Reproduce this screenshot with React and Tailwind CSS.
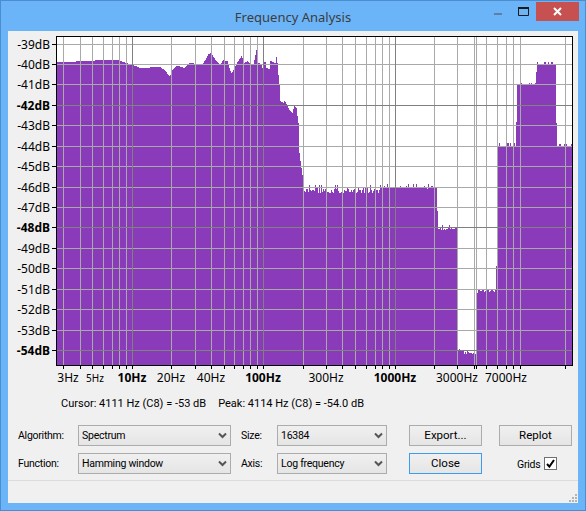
const ANCHORS = [
  [57, 62], [75, 62], [76, 61], [94, 61], [95, 60], [118, 60], [122, 61.5], [126, 63], [132, 65], [136, 66], [139, 68],
  [149, 68], [150, 67], [160, 67], [164, 70], [169, 76], [170, 75], [172, 70], [176, 66], [178, 66], [184, 68], [189, 63],
  [193, 63], [194, 64], [202, 64], [206, 58], [208, 54], [211, 53], [212, 55], [215, 60], [218, 63], [220, 64], [223, 60],
  [227, 61], [229, 68], [231, 73], [233, 70], [236, 64], [241, 56], [242, 58], [244, 63], [247, 61], [250, 64], [253, 65],
  [254, 60], [255, 55], [256, 50], [257, 50], [258, 63], [261, 64], [262, 68], [263, 61], [265, 62], [266, 68], [269, 69],
  [270, 61], [273, 62], [275, 63], [276, 57], [277, 63], [278, 75], [279, 85], [280, 101], [283, 103], [284, 101], [287, 105],
  [289, 110], [292, 113], [294, 105], [296, 108], [298, 123], [299, 153], [301, 168], [302, 175], [303, 187],
]

function noise(x) {
  const n = Math.sin(x * 12.9898) * 43758.5453
  return n - Math.floor(n)
}

function topAt(x) {
  if (x <= 303) {
    for (let i = 1; i < ANCHORS.length; i++) {
      const [x1, y1] = ANCHORS[i]
      if (x <= x1) {
        const [x0, y0] = ANCHORS[i - 1]
        return Math.round(y0 + ((y1 - y0) * (x - x0)) / (x1 - x0))
      }
    }
  }
  const r = noise(x)
  if (x < 383) return r > 0.9 ? 183 + Math.round(r * 2) : 187 + Math.round(r * 7)
  if (x < 435) return r > 0.85 ? 182 + Math.round(r * 2) : 186 + Math.round(r * 3)
  if (x < 437) return 187
  if (x < 438) return 211
  if (x < 457) return 227 + (r > 0.6 ? Math.round(r * 3) : 0) - (r < 0.1 ? 2 : 0)
  if (x < 464) return 349 + Math.round(r * 2)
  if (x < 476) return 351 + Math.round(r * 3)
  if (x < 478) return 293
  if (x < 496) return 289 + Math.round(r * 3)
  if (x < 498) return 266
  if (x < 516) return r > 0.75 ? 143 : 146
  if (x < 517) return 122
  if (x < 536) return r > 0.8 ? 83 : 84
  if (x < 537) return 72
  if (x < 556) return r > 0.6 ? 62 : 64
  if (x < 557) return 123
  return r > 0.7 ? 144 : 146
}

let spectrumPath = 'M57 365'
for (let x = 57; x < 572; x++) {
  spectrumPath += `V${topAt(x)}H${x + 1}`
}
spectrumPath += 'V365Z'

const DB_ROWS = [
  [44, '-39dB'], [64, '-40dB'], [84, '-41dB'], [105, '-42dB', true], [125, '-43dB'], [146, '-44dB'], [166, '-45dB'], [187, '-46dB'],
  [207, '-47dB'], [227, '-48dB', true], [248, '-49dB'], [268, '-50dB'], [289, '-51dB'], [309, '-52dB'], [330, '-53dB'], [350, '-54dB', true],
]
const LIGHT_X = [63, 80, 92, 103, 112, 119, 126, 171, 195, 211, 224, 234, 243, 250, 257, 303, 326, 342, 355, 366, 375, 382, 389, 434, 457, 474, 476, 486, 497, 506, 513, 520, 565]
const DARK_X = [132, 263, 395]
const HZ_LABELS = [
  [68, '3Hz'], [95, '5Hz', false, true], [132, '10Hz', true], [171, '20Hz'], [211, '40Hz'], [263, '100Hz', true],
  [326, '300Hz'], [395, '1000Hz', true], [457, '3000Hz'], [506, '7000Hz'],
]

const chartFont = { fontFamily: '"Noto Sans", sans-serif' }
const uiFont = { fontFamily: 'Roboto, sans-serif' }

function Spectrum() {
  return (
    <svg width="570" height="358" viewBox="8 31 570 358" className="block" style={chartFont}>
      <rect x="57" y="37" width="515" height="328" fill="#ffffff" />
      <path d={spectrumPath} fill="#8a3bb9" shapeRendering="crispEdges" />
      <g shapeRendering="crispEdges">
        {LIGHT_X.map(x => (
          <rect key={x} x={x} y="37" width="1" height="328" fill="#a9a9a9" />
        ))}
        {DB_ROWS.map(([y, , major]) => (
          <rect key={y} x="57" y={y} width="515" height="1" fill={major ? '#808080' : '#a9a9a9'} />
        ))}
        {DARK_X.map(x => (
          <rect key={x} x={x} y="37" width="1" height="328" fill="#808080" />
        ))}
        <rect x="56" y="36" width="517" height="1" fill="#000" />
        <rect x="56" y="36" width="1" height="330" fill="#000" />
        <rect x="572" y="36" width="1" height="330" fill="#000" />
        <rect x="56" y="365" width="517" height="1" fill="#000" />
        {DB_ROWS.map(([y]) => (
          <rect key={y} x="52" y={y} width="4" height="1" fill="#000" />
        ))}
        {[...LIGHT_X, ...DARK_X].map(x => (
          <rect key={x} x={x} y="366" width="1" height="3" fill="#000" />
        ))}
      </g>
      {DB_ROWS.map(([y, label, major]) => (
        <text key={y} x="50" y={y + 5} textAnchor="end" fontSize="12" fontWeight={major ? 700 : 400} fill="#000">{label}</text>
      ))}
      {HZ_LABELS.map(([x, label, major, small]) => (
        <text key={x} x={x} y="382" textAnchor="middle" fontSize={small ? 10 : 12} fontWeight={major ? 700 : 400} fill="#000">{label}</text>
      ))}
    </svg>
  )
}

function Select({ value }) {
  return (
    <div className="flex h-[21px] items-center justify-between border border-[#acacac] bg-gradient-to-b from-[#f0f0f0] to-[#e5e5e5] px-[3px] text-black">
      <span>{value}</span>
      <svg width="9" height="7" viewBox="0 0 9 7">
        <path d="M1 1.5 4.5 5 8 1.5" fill="none" stroke="#555" strokeWidth="2" />
      </svg>
    </div>
  )
}

function Button({ label, focused }) {
  return (
    <button
      type="button"
      className={`h-[21px] w-[73px] border bg-gradient-to-b from-[#f0f0f0] to-[#e5e5e5] text-[11.5px] leading-none tracking-normal text-black ${focused ? 'border-[#3c9cf0]' : 'border-[#acacac]'}`}
    >
      {label}
    </button>
  )
}

export default function App() {
  return (
    <div className="relative flex h-[511px] w-[586px] flex-col border border-[#4b8ecf] bg-[#6cb4f8] px-[7px] pb-[7px]" style={uiFont}>
      <div className="flex h-[30px] shrink-0">
        <div className="flex-1 pt-[7px] text-center text-[13px] text-[#3c3c3c]" style={chartFont}>Frequency Analysis</div>
      </div>

      <div className="relative flex flex-1 flex-col bg-[#f0f0f0]">
        <Spectrum />

        <div className="mt-[6px] flex h-[16px] items-center gap-[12px] pl-[53px] text-[11px] leading-none text-black">
          <span>Cursor: 4111 Hz (C8) = -53 dB</span>
          <span>Peak: 4114 Hz (C8) = -54.0 dB</span>
        </div>

        <div className="mt-[14px] grid grid-cols-[60px_153px_46px_110px_95px_90px] items-center gap-y-[7px] pl-[10px] text-[10.5px] tracking-[-0.25px]">
          <span>Algorithm:</span>
          <Select value="Spectrum" />
          <span className="ml-[10px]">Size:</span>
          <Select value="16384" />
          <div className="ml-[22px]"><Button label="Export..." /></div>
          <div className="ml-[17px]"><Button label="Replot" /></div>

          <span>Function:</span>
          <Select value="Hamming window" />
          <span className="ml-[10px]">Axis:</span>
          <Select value="Log frequency" />
          <div className="ml-[22px]"><Button label="Close" focused /></div>
          <div className="ml-[35px] flex items-center gap-[4px] whitespace-nowrap">
            <span className="pt-[2px]">Grids</span>
            <span className="flex h-[13px] w-[13px] shrink-0 items-center justify-center border border-[#707070] bg-white">
              <svg width="9" height="9" viewBox="0 0 9 9">
                <path d="M1 5 3.4 7.6 8 1" fill="none" stroke="#000" strokeWidth="2" />
              </svg>
            </span>
          </div>
        </div>

        <div className="mt-auto h-[23px] border-t border-[#dcdcdc]" />

        {/* resize grip */}
        <svg width="9" height="9" viewBox="0 0 9 9" className="absolute bottom-0 right-0">
          {[[6, 0], [3, 3], [6, 3], [0, 6], [3, 6], [6, 6]].map(([x, y]) => (
            <rect key={`${x}-${y}`} x={x} y={y} width="2" height="2" fill="#b4b4b4" />
          ))}
        </svg>
      </div>

      {/* window buttons */}
      <div className="absolute right-[6px] top-[1px] flex h-[19px] items-start">
        <svg width="8" height="2" viewBox="0 0 8 2" className="mt-[11px]"><rect width="8" height="2" fill="#5c7fa6" /></svg>
        <svg width="11" height="9" viewBox="0 0 11 9" className="ml-[16px] mt-[5px]">
          <path d="M.5 1.5h10v7H.5z" fill="none" stroke="#1a1a1a" /><rect width="11" height="2" fill="#1a1a1a" />
        </svg>
        <div className="ml-[7px] flex h-[19px] w-[43px] items-center justify-center bg-[#c75050]">
          <svg width="9" height="9" viewBox="0 0 9 9">
            <path d="M1 1 8 8M8 1 1 8" stroke="#fff" strokeWidth="2" />
          </svg>
        </div>
      </div>
    </div>
  )
}
